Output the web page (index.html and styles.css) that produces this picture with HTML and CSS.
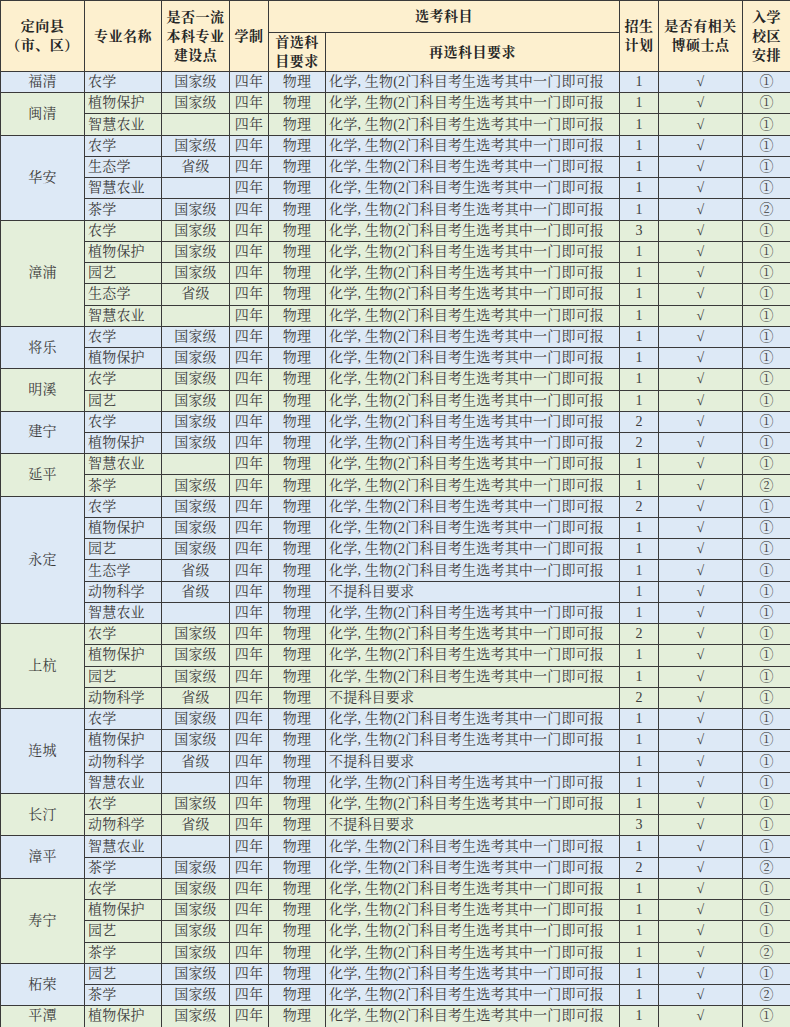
FILE: index.html
```html
<!DOCTYPE html>
<html lang="zh-CN">
<head>
<meta charset="utf-8">
<title>定向县专业表</title>
<link rel="stylesheet" href="styles.css">
</head>
<body>
<table class="tbl">
<colgroup>
<col class="w1"><col class="w2"><col class="w3"><col class="w4"><col class="w5"><col class="w6"><col class="w7"><col class="w8"><col class="w9">
</colgroup>
<thead>
<tr class="h1">
<th rowspan="2">定向县<br>（市、区）</th>
<th rowspan="2">专业名称</th>
<th rowspan="2">是否一流<br>本科专业<br>建设点</th>
<th rowspan="2">学制</th>
<th colspan="2">选考科目</th>
<th rowspan="2">招生<br>计划</th>
<th rowspan="2">是否有相关<br>博硕士点</th>
<th rowspan="2">入学<br>校区<br>安排</th>
</tr>
<tr class="h2">
<th>首选科<br>目要求</th>
<th>再选科目要求</th>
</tr>
</thead>
<tbody>
<tr class="b"><td rowspan="1" class="grp">福清</td><td class="l">农学</td><td>国家级</td><td>四年</td><td>物理</td><td class="l">化学, 生物(2门科目考生选考其中一门即可报</td><td>1</td><td>√</td><td>①</td></tr>

<tr class="g"><td rowspan="2" class="grp">闽清</td><td class="l">植物保护</td><td>国家级</td><td>四年</td><td>物理</td><td class="l">化学, 生物(2门科目考生选考其中一门即可报</td><td>1</td><td>√</td><td>①</td></tr>
<tr class="g"><td class="l">智慧农业</td><td></td><td>四年</td><td>物理</td><td class="l">化学, 生物(2门科目考生选考其中一门即可报</td><td>1</td><td>√</td><td>①</td></tr>

<tr class="b"><td rowspan="4" class="grp">华安</td><td class="l">农学</td><td>国家级</td><td>四年</td><td>物理</td><td class="l">化学, 生物(2门科目考生选考其中一门即可报</td><td>1</td><td>√</td><td>①</td></tr>
<tr class="b"><td class="l">生态学</td><td>省级</td><td>四年</td><td>物理</td><td class="l">化学, 生物(2门科目考生选考其中一门即可报</td><td>1</td><td>√</td><td>①</td></tr>
<tr class="b"><td class="l">智慧农业</td><td></td><td>四年</td><td>物理</td><td class="l">化学, 生物(2门科目考生选考其中一门即可报</td><td>1</td><td>√</td><td>①</td></tr>
<tr class="b"><td class="l">茶学</td><td>国家级</td><td>四年</td><td>物理</td><td class="l">化学, 生物(2门科目考生选考其中一门即可报</td><td>1</td><td>√</td><td>②</td></tr>

<tr class="g"><td rowspan="5" class="grp">漳浦</td><td class="l">农学</td><td>国家级</td><td>四年</td><td>物理</td><td class="l">化学, 生物(2门科目考生选考其中一门即可报</td><td>3</td><td>√</td><td>①</td></tr>
<tr class="g"><td class="l">植物保护</td><td>国家级</td><td>四年</td><td>物理</td><td class="l">化学, 生物(2门科目考生选考其中一门即可报</td><td>1</td><td>√</td><td>①</td></tr>
<tr class="g"><td class="l">园艺</td><td>国家级</td><td>四年</td><td>物理</td><td class="l">化学, 生物(2门科目考生选考其中一门即可报</td><td>1</td><td>√</td><td>①</td></tr>
<tr class="g"><td class="l">生态学</td><td>省级</td><td>四年</td><td>物理</td><td class="l">化学, 生物(2门科目考生选考其中一门即可报</td><td>1</td><td>√</td><td>①</td></tr>
<tr class="g"><td class="l">智慧农业</td><td></td><td>四年</td><td>物理</td><td class="l">化学, 生物(2门科目考生选考其中一门即可报</td><td>1</td><td>√</td><td>①</td></tr>

<tr class="b"><td rowspan="2" class="grp">将乐</td><td class="l">农学</td><td>国家级</td><td>四年</td><td>物理</td><td class="l">化学, 生物(2门科目考生选考其中一门即可报</td><td>1</td><td>√</td><td>①</td></tr>
<tr class="b"><td class="l">植物保护</td><td>国家级</td><td>四年</td><td>物理</td><td class="l">化学, 生物(2门科目考生选考其中一门即可报</td><td>1</td><td>√</td><td>①</td></tr>

<tr class="g"><td rowspan="2" class="grp">明溪</td><td class="l">农学</td><td>国家级</td><td>四年</td><td>物理</td><td class="l">化学, 生物(2门科目考生选考其中一门即可报</td><td>1</td><td>√</td><td>①</td></tr>
<tr class="g"><td class="l">园艺</td><td>国家级</td><td>四年</td><td>物理</td><td class="l">化学, 生物(2门科目考生选考其中一门即可报</td><td>1</td><td>√</td><td>①</td></tr>

<tr class="b"><td rowspan="2" class="grp">建宁</td><td class="l">农学</td><td>国家级</td><td>四年</td><td>物理</td><td class="l">化学, 生物(2门科目考生选考其中一门即可报</td><td>2</td><td>√</td><td>①</td></tr>
<tr class="b"><td class="l">植物保护</td><td>国家级</td><td>四年</td><td>物理</td><td class="l">化学, 生物(2门科目考生选考其中一门即可报</td><td>2</td><td>√</td><td>①</td></tr>

<tr class="g"><td rowspan="2" class="grp">延平</td><td class="l">智慧农业</td><td></td><td>四年</td><td>物理</td><td class="l">化学, 生物(2门科目考生选考其中一门即可报</td><td>1</td><td>√</td><td>①</td></tr>
<tr class="g"><td class="l">茶学</td><td>国家级</td><td>四年</td><td>物理</td><td class="l">化学, 生物(2门科目考生选考其中一门即可报</td><td>1</td><td>√</td><td>②</td></tr>

<tr class="b"><td rowspan="6" class="grp">永定</td><td class="l">农学</td><td>国家级</td><td>四年</td><td>物理</td><td class="l">化学, 生物(2门科目考生选考其中一门即可报</td><td>2</td><td>√</td><td>①</td></tr>
<tr class="b"><td class="l">植物保护</td><td>国家级</td><td>四年</td><td>物理</td><td class="l">化学, 生物(2门科目考生选考其中一门即可报</td><td>1</td><td>√</td><td>①</td></tr>
<tr class="b"><td class="l">园艺</td><td>国家级</td><td>四年</td><td>物理</td><td class="l">化学, 生物(2门科目考生选考其中一门即可报</td><td>1</td><td>√</td><td>①</td></tr>
<tr class="b"><td class="l">生态学</td><td>省级</td><td>四年</td><td>物理</td><td class="l">化学, 生物(2门科目考生选考其中一门即可报</td><td>1</td><td>√</td><td>①</td></tr>
<tr class="b"><td class="l">动物科学</td><td>省级</td><td>四年</td><td>物理</td><td class="l">不提科目要求</td><td>1</td><td>√</td><td>①</td></tr>
<tr class="b"><td class="l">智慧农业</td><td></td><td>四年</td><td>物理</td><td class="l">化学, 生物(2门科目考生选考其中一门即可报</td><td>1</td><td>√</td><td>①</td></tr>

<tr class="g"><td rowspan="4" class="grp">上杭</td><td class="l">农学</td><td>国家级</td><td>四年</td><td>物理</td><td class="l">化学, 生物(2门科目考生选考其中一门即可报</td><td>2</td><td>√</td><td>①</td></tr>
<tr class="g"><td class="l">植物保护</td><td>国家级</td><td>四年</td><td>物理</td><td class="l">化学, 生物(2门科目考生选考其中一门即可报</td><td>1</td><td>√</td><td>①</td></tr>
<tr class="g"><td class="l">园艺</td><td>国家级</td><td>四年</td><td>物理</td><td class="l">化学, 生物(2门科目考生选考其中一门即可报</td><td>1</td><td>√</td><td>①</td></tr>
<tr class="g"><td class="l">动物科学</td><td>省级</td><td>四年</td><td>物理</td><td class="l">不提科目要求</td><td>2</td><td>√</td><td>①</td></tr>

<tr class="b"><td rowspan="4" class="grp">连城</td><td class="l">农学</td><td>国家级</td><td>四年</td><td>物理</td><td class="l">化学, 生物(2门科目考生选考其中一门即可报</td><td>1</td><td>√</td><td>①</td></tr>
<tr class="b"><td class="l">植物保护</td><td>国家级</td><td>四年</td><td>物理</td><td class="l">化学, 生物(2门科目考生选考其中一门即可报</td><td>1</td><td>√</td><td>①</td></tr>
<tr class="b"><td class="l">动物科学</td><td>省级</td><td>四年</td><td>物理</td><td class="l">不提科目要求</td><td>1</td><td>√</td><td>①</td></tr>
<tr class="b"><td class="l">智慧农业</td><td></td><td>四年</td><td>物理</td><td class="l">化学, 生物(2门科目考生选考其中一门即可报</td><td>1</td><td>√</td><td>①</td></tr>

<tr class="g"><td rowspan="2" class="grp">长汀</td><td class="l">农学</td><td>国家级</td><td>四年</td><td>物理</td><td class="l">化学, 生物(2门科目考生选考其中一门即可报</td><td>1</td><td>√</td><td>①</td></tr>
<tr class="g"><td class="l">动物科学</td><td>省级</td><td>四年</td><td>物理</td><td class="l">不提科目要求</td><td>3</td><td>√</td><td>①</td></tr>

<tr class="b"><td rowspan="2" class="grp">漳平</td><td class="l">智慧农业</td><td></td><td>四年</td><td>物理</td><td class="l">化学, 生物(2门科目考生选考其中一门即可报</td><td>1</td><td>√</td><td>①</td></tr>
<tr class="b"><td class="l">茶学</td><td>国家级</td><td>四年</td><td>物理</td><td class="l">化学, 生物(2门科目考生选考其中一门即可报</td><td>2</td><td>√</td><td>②</td></tr>

<tr class="g"><td rowspan="4" class="grp">寿宁</td><td class="l">农学</td><td>国家级</td><td>四年</td><td>物理</td><td class="l">化学, 生物(2门科目考生选考其中一门即可报</td><td>1</td><td>√</td><td>①</td></tr>
<tr class="g"><td class="l">植物保护</td><td>国家级</td><td>四年</td><td>物理</td><td class="l">化学, 生物(2门科目考生选考其中一门即可报</td><td>1</td><td>√</td><td>①</td></tr>
<tr class="g"><td class="l">园艺</td><td>国家级</td><td>四年</td><td>物理</td><td class="l">化学, 生物(2门科目考生选考其中一门即可报</td><td>1</td><td>√</td><td>①</td></tr>
<tr class="g"><td class="l">茶学</td><td>国家级</td><td>四年</td><td>物理</td><td class="l">化学, 生物(2门科目考生选考其中一门即可报</td><td>1</td><td>√</td><td>②</td></tr>

<tr class="b"><td rowspan="2" class="grp">柘荣</td><td class="l">园艺</td><td>国家级</td><td>四年</td><td>物理</td><td class="l">化学, 生物(2门科目考生选考其中一门即可报</td><td>1</td><td>√</td><td>①</td></tr>
<tr class="b"><td class="l">茶学</td><td>国家级</td><td>四年</td><td>物理</td><td class="l">化学, 生物(2门科目考生选考其中一门即可报</td><td>1</td><td>√</td><td>②</td></tr>

<tr class="g"><td rowspan="1" class="grp">平潭</td><td class="l">植物保护</td><td>国家级</td><td>四年</td><td>物理</td><td class="l">化学, 生物(2门科目考生选考其中一门即可报</td><td>1</td><td>√</td><td>①</td></tr>
</tbody>
</table>
</body>
</html>
```

FILE: styles.css
```css
html, body {
  margin: 0;
  padding: 0;
  background: #ffffff;
}

.tbl {
  width: 790px;
  border-collapse: collapse;
  table-layout: fixed;
  font-family: "Liberation Serif", "Noto Serif CJK SC", "Noto Sans CJK SC", serif;
  font-size: 14px;
  color: #3c3c3c;
}

.w1 { width: 84px; }
.w2 { width: 77px; }
.w3 { width: 68px; }
.w4 { width: 39px; }
.w5 { width: 57px; }
.w6 { width: 294px; }
.w7 { width: 39px; }
.w8 { width: 84px; }
.w9 { width: 48px; }

.tbl th,
.tbl td {
  border: 1px solid #3a3a3a;
  padding: 0;
  text-align: center;
  vertical-align: middle;
  white-space: nowrap;
  overflow: hidden;
}

.tbl th {
  background: #fdf0cf;
  font-weight: bold;
  color: #262626;
  line-height: 19px;
  letter-spacing: 0.5px;
}

.h1 { height: 32px; }
.h2 { height: 38px; }

.tbl tbody tr { height: 21.24px; }

.tbl td {
  line-height: 18px;
  letter-spacing: 0.2px;
}

.tbl td.l {
  text-align: left;
  padding-left: 3px;
}

.tbl tr.b td { background: #dde9f6; }
.tbl tr.g td { background: #e4efda; }
```
